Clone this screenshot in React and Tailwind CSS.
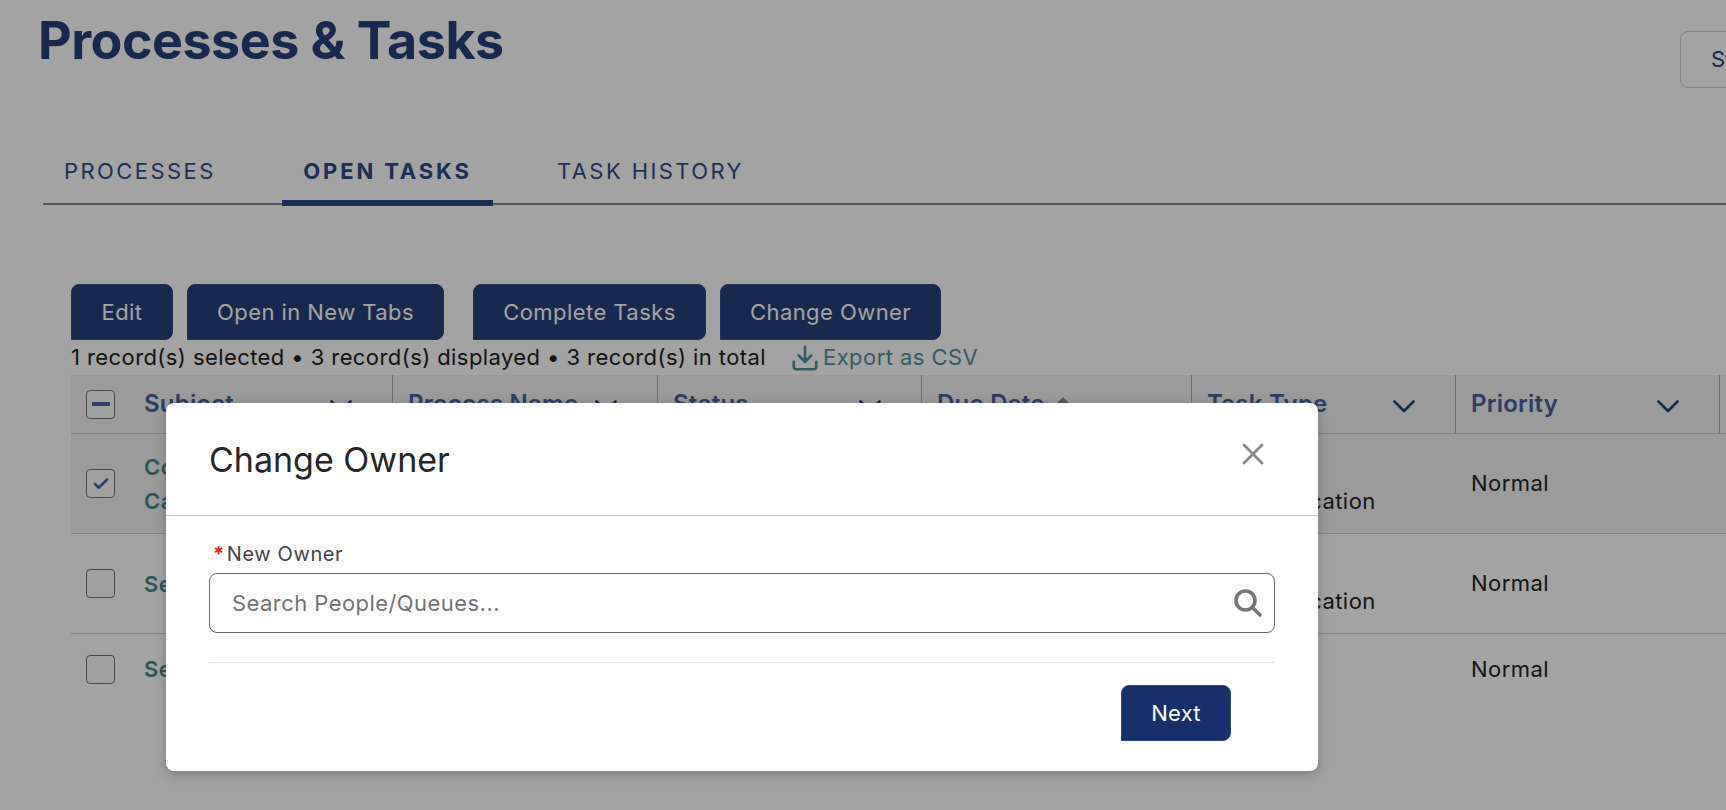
import React from "react";
import { X, Download, Check } from "lucide-react";

const font = { fontFamily: "Inter, 'Liberation Sans', sans-serif" };

function Btn({ children, w, className = "" }) {
  return (
    <button className={`h-[56px] ${w} ${className} shrink-0 rounded-[8px] rounded-bl-none bg-[#27407c] border border-[#314c8c] text-white text-[22px] tracking-[0.02em] text-center`}>
      {children}
    </button>
  );
}

function Box({ children }) {
  return (
    <span className="flex items-center justify-center w-[29px] h-[29px] shrink-0 rounded-[4px] border border-[#6f6f6f] bg-[#fbfbfb]">
      {children}
    </span>
  );
}

function Head({ w, children, first }) {
  return (
    <div className={`${w} h-[58px] flex items-center shrink-0 border-r border-[#b0b0b0] ${first ? "" : "pl-[15px]"}`}>
      {children}
    </div>
  );
}

const chev = (
  <svg className="ml-auto mr-[40px] mt-[4px] shrink-0" width="22" height="13" viewBox="0 0 22 13" fill="none" stroke="#27407c" strokeWidth="2.6" strokeLinecap="round" strokeLinejoin="round">
    <path d="M1.5 1.5 11 11l9.5-9.5" />
  </svg>
);

function Row({ h, bg, border, subject, task }) {
  return (
    <div className={`flex items-center ${h} ${bg} ${border} text-[22px] text-[#222222] tracking-[0.02em]`}>
      <div className="w-[322px] flex items-center pl-[15px] gap-[29px]">
        {subject.box}
        <div className="text-[#45868c] font-semibold leading-[34px]">{subject.text}</div>
      </div>
      <div className="w-[265px]" />
      <div className="w-[264px]" />
      <div className="w-[270px]" />
      <div className="w-[264px] pl-[15px] leading-[34px]">{task}</div>
      <div className="pl-[15px]">Normal</div>
    </div>
  );
}

export default function App() {
  return (
    <div style={font} className="relative w-[1726px] h-[810px] overflow-hidden bg-white">
      <div className="flex justify-between pl-[38px] pt-[9px]">
        <h1 className="text-[52px] leading-[64px] font-bold tracking-[-0.01em] text-[#263f7b]">Processes &amp; Tasks</h1>
        <button className="mt-[22px] h-[57px] w-[200px] shrink-0 -mr-[154px] pl-[30px] text-left rounded-[8px] border border-[#d0d0d0] text-[22px] text-[#263f7b]">Start Process</button>
      </div>

      <div className="ml-[43px] mt-[40px] flex items-start h-[77px] border-b-2 border-[#8a8a8a]">
        <div className="w-[239px] pl-[21px] pt-[27px] text-[22px] tracking-[0.11em] text-[#2f4b8a]">PROCESSES</div>
        <div className="w-[211px] h-[78px] pt-[27px] text-center border-b-[6px] border-[#2d4a88] text-[22px] tracking-[0.13em] font-bold text-[#2d4a88]">OPEN TASKS</div>
        <div className="pl-[64px] pt-[27px] text-[22px] tracking-[0.11em] text-[#2f4b8a]">TASK HISTORY</div>
      </div>

      <div className="ml-[71px] mt-[79px] flex">
        <Btn w="w-[102px]">Edit</Btn>
        <Btn w="w-[257px]" className="ml-[14px]">Open in New Tabs</Btn>
        <Btn w="w-[233px]" className="ml-[29px]">Complete Tasks</Btn>
        <Btn w="w-[221px]" className="ml-[14px]">Change Owner</Btn>
      </div>

      <div className="ml-[71px] h-[35px] flex items-center text-[22px] tracking-[0.019em] text-[#222222]">
        <span>1 record(s) selected • 3 record(s) displayed • 3 record(s) in total</span>
        <span className="ml-[24px] flex items-center gap-[3px] tracking-[0.02em] text-[#508f99]">
          <Download className="w-[30px] h-[30px]" strokeWidth={2.1} />
          Export as CSV
        </span>
      </div>

      <div className="ml-[71px]">
        <div className="flex h-[59px] bg-[#f3f3f3] border-b border-[#c8c8c8] text-[24px] tracking-[0.01em] font-semibold text-[#46619f]">
          <Head w="w-[322px]" first>
            <span className="ml-[15px] mr-[29px]"><Box><span className="w-[18px] h-[4px] bg-[#4a65a8]" /></Box></span>
            <span>Subject</span>
            {chev}
          </Head>
          <Head w="w-[265px]"><span>Process Name</span>{chev}</Head>
          <Head w="w-[264px]"><span>Status</span>{chev}</Head>
          <Head w="w-[270px]">
            <span>Due Date</span>
            <svg className="ml-[8px] -mt-[4px]" width="20" height="10" viewBox="0 0 20 10"><path d="M10 0 20 10H0z" fill="#8a8a8a" /></svg>
          </Head>
          <Head w="w-[264px]"><span>Task Type</span>{chev}</Head>
          <Head w="w-[264px]"><span>Priority</span>{chev}</Head>
        </div>
        <Row
          h="h-[100px]" bg="bg-[#f3f3f3]" border="border-b border-[#d0d0d0]"
          subject={{ box: <Box><Check className="w-[18px] h-[18px] text-[#4a65a8]" strokeWidth={3.5} /></Box>, text: <>Complete<br />Case</> }}
          task={<>Send<br />Communication</>}
        />
        <Row
          h="h-[100px]" bg="bg-white" border="border-b border-[#d0d0d0]"
          subject={{ box: <Box />, text: "Send" }}
          task={<>Send<br />Communication</>}
        />
        <Row
          h="h-[70px]" bg="bg-white" border=""
          subject={{ box: <Box />, text: "Send" }}
          task=""
        />
      </div>

      <div className="absolute inset-0 bg-black/36" />

      <div className="absolute left-[166px] top-[403px] w-[1152px] h-[368px] rounded-[8px] bg-white shadow-[0_3px_12px_rgba(0,0,0,0.25)]">
        <div className="h-[113px] border-b border-[#c8c8c8] flex items-center justify-between pl-[43px] pr-[47px]">
          <h2 className="text-[34px] font-normal text-[#262626]">Change Owner</h2>
          <X className="w-[36px] h-[36px] text-[#8a8a8a] relative top-[-5px]" strokeWidth={1.9} />
        </div>
        <div className="px-[43px]">
          <div className="mt-[21px] mb-[2px] h-[34px] flex items-center text-[20px] tracking-[0.03em] text-[#444444]">
            <span className="text-[#e02020] ml-[4px] mr-[2px] font-bold">*</span>New Owner
          </div>
          <div className="h-[60px] rounded-[8px] border border-[#666666] flex items-center justify-between pl-[22px] pr-[11px] text-[22px] tracking-[0.02em] text-[#737373]">
            <span>Search People/Queues...</span>
            <svg width="30" height="30" viewBox="0 0 30 30" fill="none" stroke="#767676" strokeWidth="3.6" strokeLinecap="round">
              <circle cx="12.5" cy="12.5" r="9.5" /><path d="M19.5 19.5 27 27" />
            </svg>
          </div>
          <div className="mt-[29px] border-t border-[#dddddd]" />
          <div className="mt-[22px] flex justify-end pr-[44px]">
            <button className="w-[110px] h-[56px] rounded-[8px] rounded-bl-none bg-[#17306b] border border-[#2a4a8e] text-white text-[22px] tracking-[0.01em]">Next</button>
          </div>
        </div>
      </div>
    </div>
  );
}
